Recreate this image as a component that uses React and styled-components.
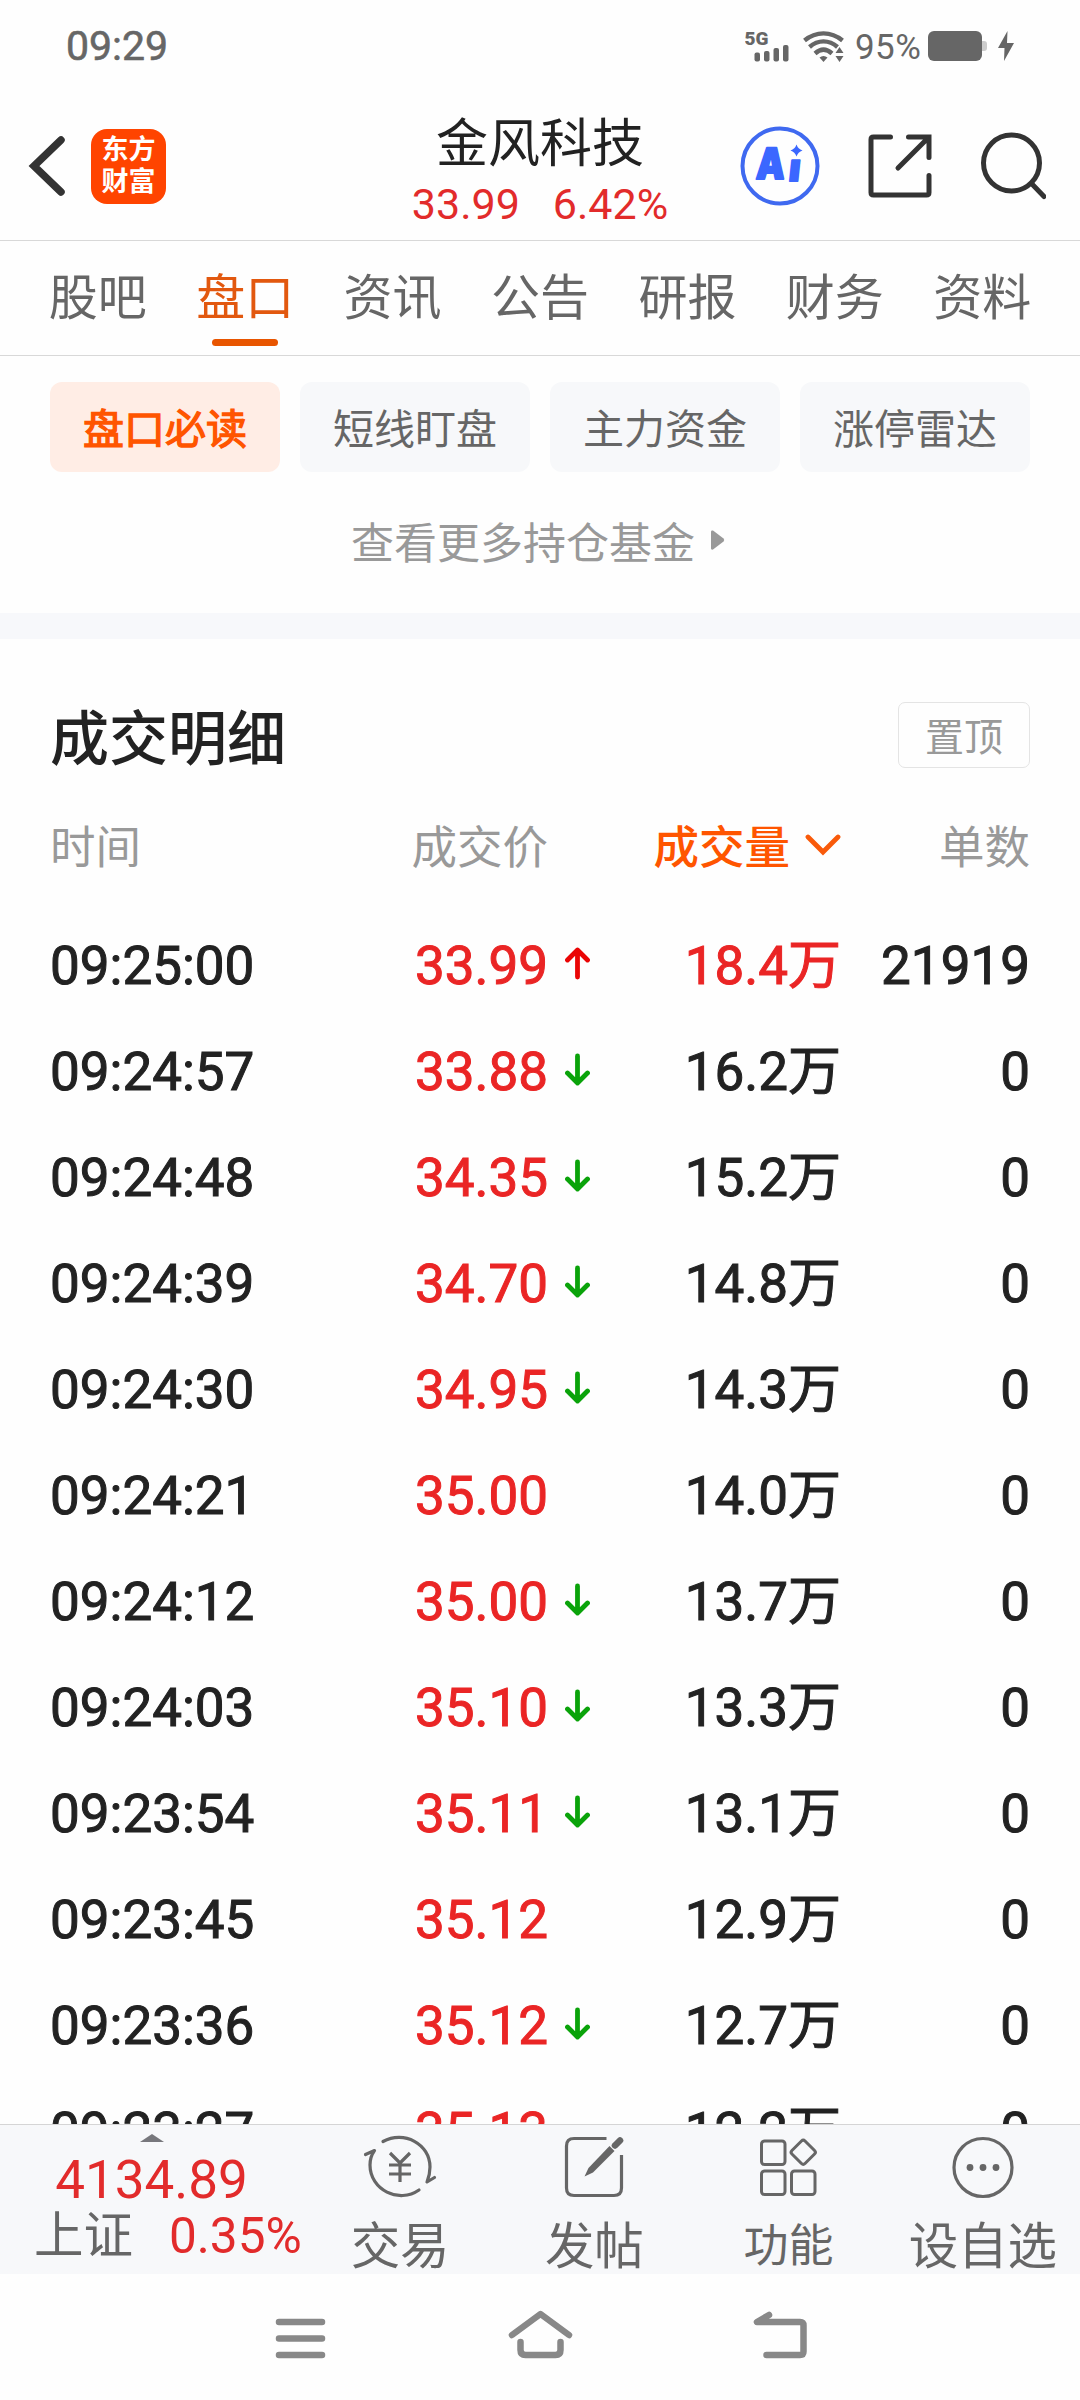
import styled, { createGlobalStyle } from 'styled-components';

const GlobalStyle = createGlobalStyle`
  * {
    box-sizing: border-box;
  }

  body {
    margin: 0;
    background-color: #fefefe;
    font-family: Roboto, 'Noto Sans CJK SC', sans-serif;
  }
`;

const Screen = styled.div`
  width: 1080px;
  height: 2400px;
  display: flex;
  flex-direction: column;
  overflow: hidden;
  color: #222;
`;

const StatusBar = styled.div`
  height: 92px;
  padding: 0 66px;
  display: flex;
  align-items: center;
  justify-content: space-between;
  color: #666;
`;

const Clock = styled.span`
  font-size: 41px;
  line-height: 92px;
  -webkit-text-stroke: 0.6px currentColor;
`;

const StatusIcons = styled.div`
  display: flex;
  align-items: center;

  svg {
    flex-shrink: 0;
  }
`;

const Network = styled.div`
  display: flex;
  gap: 12px;
`;

const Battery = styled.span`
  width: 83px;
  padding: 4px 0 0 10px;
  font-size: 35px;
  line-height: 88px;
  letter-spacing: 0.4px;
  white-space: nowrap;
`;

const Header = styled.header`
  height: 149px;
  padding: 0 28px;
  display: grid;
  grid-template-columns: 1fr 300px 1fr;
  align-items: center;
  border-bottom: 1px solid #d8d8d8;
`;

const HeaderSide = styled.div`
  padding-right: ${(props) => (props.$end ? 6 : 0)}px;
  display: flex;
  align-items: center;
  justify-content: ${(props) => (props.$end ? 'flex-end' : 'flex-start')};
  gap: ${(props) => props.$gap}px;
`;

const Logo = styled.div`
  width: 75px;
  height: 75px;
  padding-top: 5px;
  border-radius: 16px;
  background-color: #ff4400;
  color: white;
  font-size: 27px;
  font-weight: 700;
  line-height: 32px;
  text-align: center;
`;

const StockInfo = styled.div`
  padding-top: 14px;
  text-align: center;
`;

const StockName = styled.h1`
  margin: 0;
  font-size: 52px;
  font-weight: 400;
  line-height: 62px;
`;

const StockQuote = styled.div`
  display: flex;
  justify-content: center;
  gap: 33px;
  color: #e22b2b;
  font-size: 43px;
  line-height: 56px;
`;

const Tabs = styled.nav`
  height: 115px;
  padding: 0 24px;
  display: flex;
  border-bottom: 1px solid #d8d8d8;
`;

const Tab = styled.a`
  flex: 1;
  padding-top: 18px;
  display: flex;
  flex-direction: column;
  align-items: center;
  color: ${(props) => (props.$active ? '#e2580f' : '#666')};
  font-size: 49px;
  line-height: 80px;

  &::after {
    content: '';
    width: 66px;
    height: 7px;
    border-radius: 4px;
    background-color: ${(props) => (props.$active ? '#e85500' : 'transparent')};
  }
`;

const Chips = styled.div`
  padding: 26px 50px 0;
  display: flex;
  gap: 20px;
`;

const Chip = styled.button`
  flex: 1;
  height: 90px;
  padding: 7px 0 0;
  border: none;
  border-radius: 12px;
  background-color: ${(props) => (props.$active ? '#ffede5' : '#f7f8fa')};
  color: ${(props) => (props.$active ? '#ff5500' : '#666')};
  font-family: inherit;
  font-size: 41px;
  line-height: 83px;
  -webkit-text-stroke: ${(props) => (props.$active ? '1.3px currentColor' : '0')};
`;

const MoreLink = styled.a`
  height: 141px;
  padding: 0 4px 5px 0;
  display: flex;
  align-items: center;
  justify-content: center;
  gap: 16px;
  color: #999;
  font-size: 43px;
`;

const Divider = styled.div`
  height: 26px;
  background-color: #f7f8fb;
`;

const Details = styled.section`
  flex: 1;
  min-height: 0;
  padding: 63px 50px 0;
  overflow: hidden;
`;

const DetailsHeader = styled.div`
  height: 66px;
  display: flex;
  align-items: center;
  justify-content: space-between;
`;

const DetailsTitle = styled.h2`
  margin: 0;
  padding-top: 10px;
  font-size: 59px;
  font-weight: 500;
  line-height: 66px;
`;

const PinButton = styled.button`
  width: 132px;
  height: 66px;
  padding: 6px 0 0;
  border: 1px solid #e4e4e4;
  border-radius: 7px;
  background: none;
  color: #999;
  font-family: inherit;
  font-size: 39px;
  line-height: 58px;
`;

const Row = styled.div`
  height: 106px;
  display: grid;
  grid-template-columns: 300px 198px 59px 234px 189px;
  align-items: center;
  font-size: 53px;
  line-height: 102px;
  white-space: nowrap;
  -webkit-text-stroke: 1px currentColor;
`;

const HeadRow = styled(Row)`
  height: 143px;
  padding-top: 15px;
  color: #999;
  font-size: 45.5px;
  line-height: 124px;
  -webkit-text-stroke: 0;
`;

const Cell = styled.span`
  padding-top: 4px;
  display: flex;
  align-items: center;
  justify-content: ${(props) => (props.$left ? 'flex-start' : 'flex-end')};
  color: ${(props) => (props.$red ? '#ea2525' : 'inherit')};
`;

const SortCell = styled(Cell)`
  gap: 15px;
  color: #ff5500;
  font-weight: 500;

  svg {
    margin-bottom: 8px;
  }
`;

const ArrowCell = styled.span`
  padding: 0 0 2px 17px;
  display: flex;
`;

const Toolbar = styled.footer`
  height: 150px;
  display: grid;
  grid-template-columns: 303px repeat(4, 194.25px);
  border-top: 1px solid #d5d5d5;
  background-color: #f7f8fa;
`;

const IndexPanel = styled.div`
  padding-top: 9px;
  display: flex;
  flex-direction: column;
  align-items: center;
  color: #e22b2b;
`;

const IndexValue = styled.span`
  font-size: 53px;
  line-height: 56px;
  margin-top: 10px;
`;

const IndexChange = styled.div`
  display: flex;
  gap: 36px;
  margin-top: 1px;
  padding-left: 34px;
  align-self: flex-start;
  font-size: 49.5px;
  line-height: 54px;
  white-space: nowrap;
`;

const IndexName = styled.span`
  color: #666;
`;

const Tool = styled.a`
  padding-top: 8px;
  display: flex;
  flex-direction: column;
  align-items: center;
  color: #666;
`;

const ToolLabel = styled.span`
  margin-top: 23px;
  font-size: ${(props) => (props.$small ? 45 : 49.5)}px;
  line-height: 50px;
  white-space: nowrap;
`;

const SystemNav = styled.div`
  height: 126px;
  padding: 0 267px 6px;
  display: flex;
  align-items: center;
  justify-content: space-between;
`;

const SignalIcon = () => (
  <svg width="46" height="34" viewBox="0 0 46 34" fill="#666">
    <text x="-0.5" y="16" fontFamily="Roboto" fontSize="19" fontWeight="900">5G</text>
    <rect x="9.5" y="23.500" width="5.5" height="9" rx="2" />
    <rect x="19" y="22" width="5.5" height="10.500" rx="2" />
    <rect x="28.5" y="19" width="5.5" height="13.500" rx="2" />
    <rect x="38" y="16" width="5.5" height="16.500" rx="2" />
  </svg>
);

const WifiIcon = () => (
  <svg width="42" height="34" viewBox="0 0 42 34" fill="none" stroke="#666" strokeWidth="4.4">
    <path d="M1.5 11.5C13 2 28 2 39.5 11.5" />
    <path d="M6.5 18C15 10.5 26 10.5 34.5 18" />
    <path d="M12 24.5C17.500 19.5 23.500 19.5 29 24.500" />
    <path d="M16.500 28.500C19 26.500 22 26.500 24.500 28.500L20.500 33Z" fill="#666" stroke="none" />
    <path d="M36.500 18L40.500 24H32.500ZM36.500 33L40.500 27H32.500Z" fill="#666" stroke="none" />
  </svg>
);

const BatteryIcon = () => (
  <svg width="60" height="30" viewBox="0 0 60 30">
    <rect width="54" height="30" rx="6" fill="#666" />
    <path d="M54 10H56Q59 10 59 13V17Q59 20 56 20H54Z" fill="#ccc" />
  </svg>
);

const BoltIcon = () => (
  <svg width="26" height="30" viewBox="-10 0 26 30">
    <path d="M9.500 0L0 17H6.500L6 30L16 12H9Z" fill="#666" />
  </svg>
);

const BackIcon = () => (
  <svg width="38" height="62" viewBox="0 0 38 62" fill="none" stroke="#333" strokeWidth="7.500" strokeLinecap="round">
    <path d="M33 5L6 31L33 57" />
  </svg>
);

const AiIcon = () => (
  <svg width="80" height="80" viewBox="0 0 80 80" fill="#3b67ff">
    <circle cx="40" cy="40" r="37.500" fill="none" stroke="#3f69f0" strokeWidth="4" />
    <g fontFamily="Inter" fontWeight="900" stroke="#3b67ff" strokeWidth="2" strokeLinejoin="round">
      <text transform="translate(15.500 53) scale(0.84 1) skewX(-4)" fontSize="43">A</text>
      <text transform="translate(48 55) skewX(-6)" fontSize="38">ı</text>
    </g>
    <path d="M56.500 18.500Q58 23 62.500 24.500Q58 26 56.500 30.500Q55 26 50.500 24.500Q55 23 56.500 18.500Z" />
  </svg>
);

const ShareIcon = () => (
  <svg width="64" height="64" viewBox="0 0 64 64" fill="none" stroke="#333" strokeWidth="5" strokeLinecap="round">
    <path d="M22.500 3H5.500Q3 3 3 5.500V58.500Q3 61 5.500 61H58.500Q61 61 61 58.500V41.500" />
    <path d="M40.500 3H61V23.500M60 4L30 34" />
  </svg>
);

const SearchIcon = () => (
  <svg width="66" height="68" viewBox="0 0 66 68" fill="none" stroke="#333" strokeWidth="5" strokeLinecap="round">
    <circle cx="31.500" cy="31" r="28" />
    <path d="M51.500 51.500L64 64.500" />
  </svg>
);

const ArrowIcon = ({ up }) => (
  <svg width="25" height="33" viewBox="0 0 25 33" fill="none" stroke={up ? '#ea0505' : '#0aa30a'} strokeWidth="4.800" strokeLinecap="round" strokeLinejoin="round">
    {up ? <path d="M12.500 30V4M2.500 13L12.500 3L22.500 13" /> : <path d="M12.500 3V29M2.500 20L12.500 30L22.500 20" />}
  </svg>
);

const YenIcon = () => (
  <svg width="74" height="66" viewBox="0 0 74 66" fill="none" stroke="#666" strokeWidth="3.200" strokeLinecap="round" strokeLinejoin="round">
    <path d="M20 8.500C41 -3 67 11 67 34C67 39 66 44 64 49L71.500 44.500" />
    <path d="M56 57C36 71 7 57 7 32C7 27 9 21 11.500 17.500L2.500 21.500" />
    <path d="M27 20L37 30L47 20M37 30V49M26 32H48M26 41H48" strokeLinecap="butt" />
  </svg>
);

const PostIcon = () => (
  <svg width="60" height="66" viewBox="0 0 60 66" fill="none" stroke="#666" strokeWidth="3.200">
    <path d="M42.500 5.500H10Q2.500 5.500 2.500 13V55Q2.500 62.500 10 62.500H50Q57.500 62.500 57.500 55V22" />
    <path d="M45.500 13L50.500 18L29 39.500L20.500 43.500L24.500 35Z" fill="#666" stroke="none" />
    <path d="M51 12.500L56 7.500" strokeWidth="6.500" strokeLinecap="round" />
  </svg>
);

const GridIcon = () => (
  <svg width="60" height="66" viewBox="0 0 60 66" fill="none" stroke="#666" strokeWidth="3">
    <rect x="2.500" y="8" width="23.500" height="23.500" rx="3" />
    <rect x="2.500" y="38" width="23.500" height="23.500" rx="3" />
    <rect x="32.500" y="38" width="23.500" height="23.500" rx="3" />
    <rect x="35" y="10" width="18.500" height="18.500" rx="2.500" transform="rotate(45 44.250 19.250)" />
  </svg>
);

const MoreIcon = () => (
  <svg width="66" height="66" viewBox="0 0 66 66" fill="#666">
    <circle cx="33" cy="34.500" r="29" fill="none" stroke="#666" strokeWidth="3.200" />
    <circle cx="20" cy="34.500" r="3.400" />
    <circle cx="33" cy="34.500" r="3.400" />
    <circle cx="46" cy="34.500" r="3.400" />
  </svg>
);

const tabs = ['股吧', '盘口', '资讯', '公告', '研报', '财务', '资料'];

const chips = ['盘口必读', '短线盯盘', '主力资金', '涨停雷达'];

const trades = [
  { time: '09:25:00', price: '33.99', move: 'up', volume: '18.4万', count: 21919 },
  { time: '09:24:57', price: '33.88', move: 'down', volume: '16.2万', count: 0 },
  { time: '09:24:48', price: '34.35', move: 'down', volume: '15.2万', count: 0 },
  { time: '09:24:39', price: '34.70', move: 'down', volume: '14.8万', count: 0 },
  { time: '09:24:30', price: '34.95', move: 'down', volume: '14.3万', count: 0 },
  { time: '09:24:21', price: '35.00', volume: '14.0万', count: 0 },
  { time: '09:24:12', price: '35.00', move: 'down', volume: '13.7万', count: 0 },
  { time: '09:24:03', price: '35.10', move: 'down', volume: '13.3万', count: 0 },
  { time: '09:23:54', price: '35.11', move: 'down', volume: '13.1万', count: 0 },
  { time: '09:23:45', price: '35.12', volume: '12.9万', count: 0 },
  { time: '09:23:36', price: '35.12', move: 'down', volume: '12.7万', count: 0 },
  { time: '09:23:27', price: '35.13', volume: '12.2万', count: 0 },
];

const tools = [
  { label: '交易', Icon: YenIcon },
  { label: '发帖', Icon: PostIcon },
  { label: '功能', Icon: GridIcon, small: true },
  { label: '设自选', Icon: MoreIcon },
];

const App = () => {
  return (
    <>
      <GlobalStyle />
      <Screen>
        <StatusBar>
          <Clock>09:29</Clock>
          <StatusIcons>
            <Network>
              <SignalIcon />
              <WifiIcon />
            </Network>
            <Battery>95%</Battery>
            <BatteryIcon />
            <BoltIcon />
          </StatusIcons>
        </StatusBar>

        <Header>
          <HeaderSide $gap={25}>
            <BackIcon />
            <Logo>
              东方
              <br />
              财富
            </Logo>
          </HeaderSide>
          <StockInfo>
            <StockName>金风科技</StockName>
            <StockQuote>
              <span>33.99</span>
              <span>6.42%</span>
            </StockQuote>
          </StockInfo>
          <HeaderSide $end $gap={48}>
            <AiIcon />
            <ShareIcon />
            <SearchIcon />
          </HeaderSide>
        </Header>

        <Tabs>
          {tabs.map((tab) => (
            <Tab key={tab} $active={tab === '盘口'}>{tab}</Tab>
          ))}
        </Tabs>

        <Chips>
          {chips.map((chip, index) => (
            <Chip key={chip} $active={index === 0}>{chip}</Chip>
          ))}
        </Chips>

        <MoreLink>
          查看更多持仓基金
          <svg width="14" height="20" viewBox="0 0 14 20" fill="#999">
            <path d="M0 1.500Q0 0 2 0.500L12.500 8.500Q14 10 12.500 11.500L2 19.500Q0 20 0 18.500Z" />
          </svg>
        </MoreLink>

        <Divider />

        <Details>
          <DetailsHeader>
            <DetailsTitle>成交明细</DetailsTitle>
            <PinButton>置顶</PinButton>
          </DetailsHeader>
          <HeadRow>
            <Cell $left>时间</Cell>
            <Cell>成交价</Cell>
            <span />
            <SortCell>
              成交量
              <svg width="36" height="22" viewBox="0 0 36 22" fill="none" stroke="#f95a0a" strokeWidth="4.800" strokeLinecap="round">
                <path d="M3 3L18 18L33 3" />
              </svg>
            </SortCell>
            <Cell>单数</Cell>
          </HeadRow>
          {trades.map((trade) => (
            <Row key={trade.time}>
              <Cell $left>{trade.time}</Cell>
              <Cell $red>{trade.price}</Cell>
              <ArrowCell>{trade.move && <ArrowIcon up={trade.move === 'up'} />}</ArrowCell>
              <Cell $red={trade.move === 'up'}>{trade.volume}</Cell>
              <Cell>{trade.count}</Cell>
            </Row>
          ))}
        </Details>

        <Toolbar>
          <IndexPanel>
            <svg width="24" height="8" viewBox="0 0 24 8" fill="#77777c">
              <path d="M12 0L24 8H0Z" />
            </svg>
            <IndexValue>4134.89</IndexValue>
            <IndexChange>
              <IndexName>上证</IndexName>
              <span>0.35%</span>
            </IndexChange>
          </IndexPanel>
          {tools.map(({ label, Icon, small }) => (
            <Tool key={label}>
              <Icon />
              <ToolLabel $small={small}>{label}</ToolLabel>
            </Tool>
          ))}
        </Toolbar>

        <SystemNav>
          <svg width="66" height="60" viewBox="0 0 66 60" fill="none" stroke="#888" strokeWidth="6.500" strokeLinecap="round">
            <path d="M12 18H55M12 34.500H55M12 51H55" />
          </svg>
          <svg width="66" height="60" viewBox="0 0 66 60" fill="none" stroke="#888" strokeWidth="6.500" strokeLinecap="round" strokeLinejoin="round">
            <path d="M5 31L33.500 10L62 31" />
            <path d="M13.500 38V46Q13.500 51 18.500 51H48.500Q53.500 51 53.500 46V38" />
          </svg>
          <svg width="66" height="60" viewBox="0 0 66 60" fill="none" stroke="#888" strokeWidth="6.500" strokeLinecap="round" strokeLinejoin="round">
            <path d="M22 11L10 18H53Q56.500 18 56.500 21.500V47.500Q56.500 51 53 51H19.500" />
          </svg>
        </SystemNav>
      </Screen>
    </>
  );
};

export default App;
